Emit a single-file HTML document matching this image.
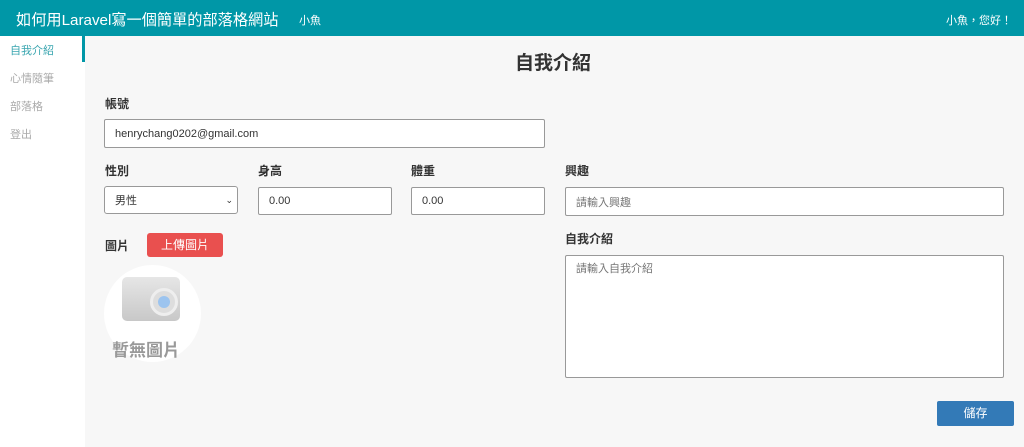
<!DOCTYPE html>
<html><head><meta charset="utf-8"><style>
*{box-sizing:border-box;margin:0;padding:0}
body{width:1024px;height:447px;overflow:hidden;background:#f7f7f7;font-family:"Liberation Sans","Noto Sans CJK TC",sans-serif;position:relative;color:#333}
.hdr{position:absolute;left:0;top:0;width:1024px;height:36px;background:#0097a7;color:#fff}
.side{position:absolute;left:0;top:36px;width:85px;height:411px;background:#fff}
.side div{position:absolute;left:10px;font-size:11px;color:#aaa}
.abs{position:absolute}
.lbl{position:absolute;font-size:12px;font-weight:bold;color:#333}
.in{position:absolute;background:#fff;border:1px solid #999;border-radius:2px;font-size:11px;color:#333;padding-left:10px;display:flex;align-items:center}
</style></head><body>
<div class="hdr">
<div class="abs" style="left:16px;top:8px;font-size:15.2px">如何用Laravel寫一個簡單的部落格網站</div>
<div class="abs" style="left:299px;top:12px;font-size:11px">小魚</div>
<div class="abs" style="left:946px;top:12px;font-size:11px">小魚，您好！</div>
</div>
<div class="side">
<div style="top:6px;color:#3aa6b0">自我介紹</div>
<div style="top:34px">心情隨筆</div>
<div style="top:62px">部落格</div>
<div style="top:90px">登出</div>
<span class="abs" style="left:82px;top:0;width:3px;height:26px;background:#0097a7"></span>
</div>
<div class="abs" style="left:515px;top:48px;font-size:19px;font-weight:bold;color:#333">自我介紹</div>
<div class="lbl" style="left:105px;top:95px">帳號</div>
<div class="in" style="left:104px;top:119px;width:441px;height:29px">henrychang0202@gmail.com</div>
<div class="lbl" style="left:105px;top:162px">性別</div>
<div class="lbl" style="left:258px;top:162px">身高</div>
<div class="lbl" style="left:411px;top:162px">體重</div>
<div class="lbl" style="left:565px;top:162px">興趣</div>
<div class="in" style="left:104px;top:186px;width:134px;height:28px;border-radius:3px">男性<span class="abs" style="right:4px;top:8px;font-size:9px">⌄</span></div>
<div class="in" style="left:258px;top:187px;width:134px;height:28px">0.00</div>
<div class="in" style="left:411px;top:187px;width:134px;height:28px">0.00</div>
<div class="in" style="left:565px;top:187px;width:439px;height:29px;color:#777">請輸入興趣</div>
<div class="lbl" style="left:105px;top:237px;font-size:12px">圖片</div>
<div class="abs" style="left:147px;top:233px;width:76px;height:24px;background:#e9504f;border-radius:3px;color:#fff;font-size:12px;text-align:center;line-height:24px">上傳圖片</div>
<div class="abs" style="left:104px;top:265px;width:97px;height:97px;border-radius:50%;background:#fff"></div>
<div class="abs" style="left:122px;top:277px;width:58px;height:44px;background:linear-gradient(#e6e6e6,#c8c8c8);border-radius:5px"></div>
<div class="abs" style="left:150px;top:288px;width:28px;height:28px;border-radius:50%;background:#ddd;border:3px solid #eee"></div>
<div class="abs" style="left:158px;top:296px;width:12px;height:12px;border-radius:50%;background:#9cc4ef"></div>
<div class="abs" style="left:112px;top:336px;font-size:17px;font-weight:bold;color:#999;letter-spacing:0">暫無圖片</div>
<div class="lbl" style="left:565px;top:230px">自我介紹</div>
<div class="in" style="left:565px;top:255px;width:439px;height:123px;align-items:flex-start;padding-top:4px;color:#777">請輸入自我介紹</div>
<div class="abs" style="left:937px;top:401px;width:77px;height:25px;background:#337ab7;border-radius:2px;color:#fff;font-size:12px;text-align:center;line-height:25px">儲存</div>
</body></html>
